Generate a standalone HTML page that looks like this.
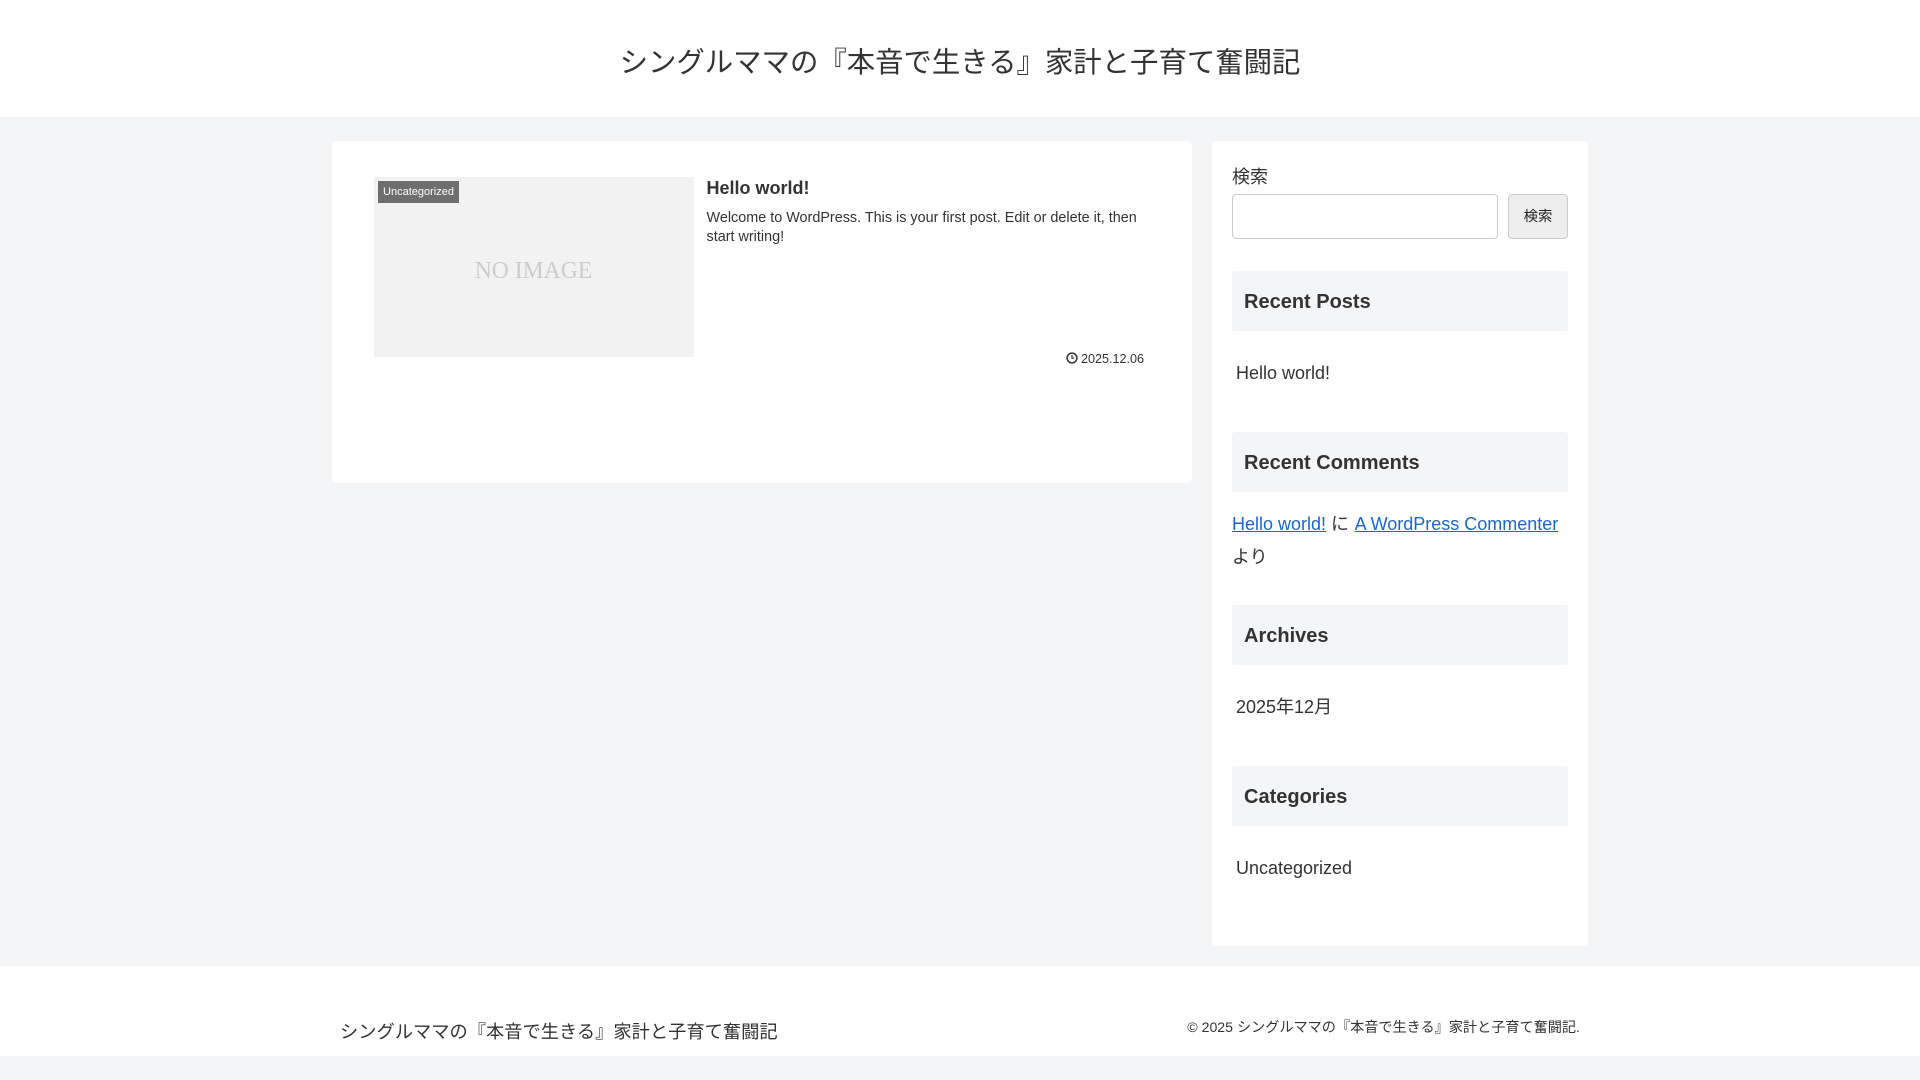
<!DOCTYPE html>
<html lang="ja"><head><meta charset="utf-8"><title>シングルママの『本音で生きる』家計と子育て奮闘記</title>
<style>
*{box-sizing:border-box}
html,body{margin:0;padding:0}
body{width:1920px;height:1080px;position:relative;overflow:hidden;background:#f4f5f7;color:#333;font-family:"Liberation Sans","WenQuanYi Zen Hei",sans-serif;font-size:18px}
.a{position:absolute;white-space:nowrap}
.w{background:#fff}
.card{border-radius:4px}
.t{left:1232px;width:336px;height:60px;background:#f4f5f7;border-radius:3px;font-size:20px;font-weight:700;line-height:62px;padding-left:12px}
.l{left:1236px;line-height:32px}
a{color:#1967d2;text-decoration:underline}
</style></head><body>
<div class="a w" style="left:0;top:0;width:1920px;height:117px"></div>
<div class="a" style="left:0;width:1920px;top:40px;text-align:center;font-size:28.4px;line-height:46px">シングルママの『本音で生きる』家計と子育て奮闘記</div>

<div class="a w card" style="left:332px;top:141px;width:860px;height:342px"></div>
<div class="a" style="left:374px;top:177px;width:320px;height:180px;background:#f2f2f2"></div>
<div class="a" style="left:374px;top:257px;width:319px;text-align:center;font-family:'Liberation Serif',serif;font-size:24px;line-height:28px;color:#ccc;transform:scaleX(.985)">NO IMAGE</div>
<div class="a" style="left:378px;top:181px;height:22px;width:81px;background:#6e6e6e;color:#fff;font-size:11px;line-height:22px;text-align:center">Uncategorized</div>
<div class="a" style="left:706.5px;top:176px;font-size:18px;font-weight:700;line-height:24px">Hello world!</div>
<div class="a" style="left:706.5px;top:209px;font-size:14.4px;line-height:19px;white-space:normal;width:456px">Welcome to WordPress. This is your first post. Edit or delete it, then start writing!</div>
<svg class="a" style="left:1066px;top:352px" width="12" height="12" viewBox="0 0 12 12"><circle cx="6" cy="6" r="4.9" fill="none" stroke="#333" stroke-width="1.5"/><path d="M6 3v3.2h2.2" fill="none" stroke="#333" stroke-width="1.1"/></svg>
<div class="a" style="left:1081px;top:350px;font-size:12.6px;line-height:18px">2025.12.06</div>

<div class="a w card" style="left:1212px;top:141px;width:376px;height:805px"></div>
<div class="a" style="left:1232px;top:161px;line-height:32px">検索</div>
<div class="a" style="left:1232px;top:194px;width:266px;height:45px;background:#fff;border:1px solid #ccc;border-radius:4px"></div>
<div class="a" style="left:1508px;top:194px;width:60px;height:45px;background:#eee;border:1px solid #ccc;border-radius:4px;color:#222;font-size:14.4px;line-height:44px;text-align:center">検索</div>

<div class="a t" style="top:271px">Recent Posts</div>
<div class="a l" style="top:357px">Hello world!</div>
<div class="a t" style="top:432px">Recent Comments</div>
<div class="a" style="left:1232px;top:508px;line-height:32px"><a>Hello world!</a> に <a style="margin-left:.5px">A WordPress Commenter</a></div>
<div class="a" style="left:1232px;top:541px;line-height:32px">より</div>
<div class="a t" style="top:605px">Archives</div>
<div class="a l" style="top:691px">2025年12月</div>
<div class="a t" style="top:766px">Categories</div>
<div class="a l" style="top:852px">Uncategorized</div>

<div class="a w" style="left:0;top:966px;width:1920px;height:90px"></div>
<div class="a" style="left:340px;top:1018px;font-size:18.25px;line-height:28px">シングルママの『本音で生きる』家計と子育て奮闘記</div>
<div class="a" style="right:340px;top:1017px;font-size:14.15px;line-height:20px">© 2025 シングルママの『本音で生きる』家計と子育て奮闘記.</div>
</body></html>
